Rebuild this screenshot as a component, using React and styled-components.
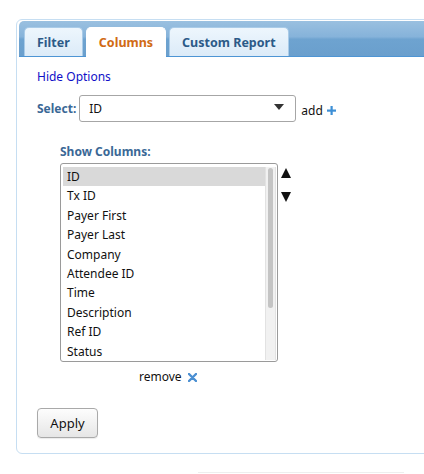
import React from "react";
import styled, { createGlobalStyle } from "styled-components";

const GlobalStyle = createGlobalStyle`
  html, body {
    margin: 0;
    padding: 0;
    background: #fff;
    overflow: hidden;
  }
  body {
    font-family: "Noto Sans", "Open Sans", "DejaVu Sans", sans-serif;
    font-size: 12px;
    color: #111;
  }
`;

const Page = styled.div`
  width: 424px;
  height: 474px;
  padding-top: 19px;
  box-sizing: border-box;
  overflow: hidden;
`;

const Panel = styled.div`
  margin-left: 16px;
  width: 430px;
  height: 435px;
  box-sizing: border-box;
  border: 1px solid #c6def2;
  border-radius: 6px;
  padding: 1px 2px;
`;

const TabBar = styled.div`
  display: flex;
  align-items: flex-end;
  gap: 3px;
  height: 36px;
  box-sizing: border-box;
  padding-left: 5px;
  border-radius: 5px 0 0 0;
  border-bottom: 1px solid #4e95d4;
  background: linear-gradient(
    to bottom,
    #9ac0e0 0%,
    #86b3da 45%,
    #6ea3d0 52%,
    #6a9fcd 100%
  );
`;

const Tab = styled.div`
  height: ${(p) => (p.$active ? "30px" : "29px")};
  margin-bottom: ${(p) => (p.$active ? "-1px" : "0")};
  box-sizing: border-box;
  padding: 0 12px;
  display: flex;
  align-items: center;
  font-weight: bold;
  font-size: 12.5px;
  color: ${(p) => (p.$active ? "#d16a14" : "#2c5a88")};
  background: ${(p) =>
    p.$active ? "#fff" : "linear-gradient(to bottom, #edf6fd, #dcebf8)"};
  border: 1px solid ${(p) => (p.$active ? "#fff" : "#a9cbe8")};
  border-bottom: none;
  border-radius: 5px 5px 0 0;
`;

const Content = styled.div`
  padding: 12px 0 0 18px;
`;

const HideLink = styled.a`
  color: #1010c8;
  text-decoration: none;
  font-size: 12px;
  display: block;
  line-height: 16px;
`;

const SelectRow = styled.div`
  display: flex;
  align-items: center;
  margin-top: 10px;
`;

const Label = styled.span`
  font-weight: bold;
  color: #3a6896;
  font-size: 12px;
`;

const SelectBox = styled.div`
  margin-left: 3px;
  width: 217px;
  height: 27px;
  box-sizing: border-box;
  border: 1px solid #a6a6a6;
  border-radius: 3px;
  display: flex;
  align-items: center;
  justify-content: space-between;
  padding: 0 11px 0 9px;
  background: #fff;
`;

const Caret = styled.span`
  width: 0;
  height: 0;
  border-left: 5px solid transparent;
  border-right: 5px solid transparent;
  border-top: 6px solid #333;
  margin-top: -4px;
`;

const AddLink = styled.span`
  margin-left: 5px;
  display: flex;
  align-items: center;
  gap: 4px;
  margin-top: 3px;
`;

const Columns = styled.div`
  margin-left: 23px;
  margin-top: 21px;
`;

const ListRow = styled.div`
  display: flex;
  margin-top: 3px;
`;

const ListBox = styled.div`
  width: 218px;
  height: 199px;
  box-sizing: border-box;
  border: 1px solid #9a9a9a;
  border-radius: 3px;
  padding: 3px 1px 1px 2px;
  display: flex;
`;

const Items = styled.div`
  flex: 1;
  overflow: hidden;
`;

const Item = styled.div`
  height: 19.4px;
  line-height: 19.4px;
  padding-left: 4px;
  font-size: 12px;
  color: #111;
  background: ${(p) => (p.$selected ? "#d9d9d9" : "transparent")};
`;

const Track = styled.div`
  width: 11px;
  background: #f1f1f1;
  border-left: 1px solid #e2e2e2;
  border-right: 1px solid #e2e2e2;
  padding: 1px 2px;
  box-sizing: border-box;
`;

const Thumb = styled.div`
  height: 140px;
  border-radius: 4px;
  background: #c4c4c4;
`;

const Arrows = styled.div`
  display: flex;
  flex-direction: column;
  margin-left: 3px;
  gap: 14px;
  padding-top: 5px;
`;

const Arrow = styled.span`
  width: 0;
  height: 0;
  border-left: 5px solid transparent;
  border-right: 5px solid transparent;
  ${(p) =>
    p.$up ? "border-bottom: 10px solid #111;" : "border-top: 10px solid #111;"}
`;

const RemoveRow = styled.div`
  display: flex;
  align-items: center;
  gap: 6px;
  margin-left: 79px;
  margin-top: 8px;
  line-height: 14px;
`;

const ApplyButton = styled.button`
  margin-top: 24px;
  width: 61px;
  height: 30px;
  font-family: inherit;
  font-size: 13px;
  color: #111;
  border: 1px solid #a9a9a9;
  border-radius: 4px;
  background: linear-gradient(to bottom, #fdfdfd, #e6e6e6);
  box-shadow: 0 1px 1px rgba(0, 0, 0, 0.08);
`;

const FooterLine = styled.div`
  margin: 18px 0 0 198px;
  width: 206px;
  border-top: 1px solid #eeeeee;
`;

const PlusIcon = () => (
  <svg width="9" height="9" viewBox="0 0 9 9">
    <rect x="3.5" y="0" width="2.2" height="9" fill="#3d8fd6" />
    <rect x="0" y="3.5" width="9" height="2.2" fill="#3d8fd6" />
  </svg>
);

const CrossIcon = () => (
  <svg width="9" height="9" viewBox="0 0 9 9">
    <path d="M1 1 L8 8 M8 1 L1 8" stroke="#4a8fd2" strokeWidth="2.4" strokeLinecap="round" />
  </svg>
);

const columns = [
  "ID",
  "Tx ID",
  "Payer First",
  "Payer Last",
  "Company",
  "Attendee ID",
  "Time",
  "Description",
  "Ref ID",
  "Status",
];

export default function App() {
  return (
    <Page>
      <GlobalStyle />
      <Panel>
        <TabBar>
          <Tab>Filter</Tab>
          <Tab $active>Columns</Tab>
          <Tab>Custom Report</Tab>
        </TabBar>
        <Content>
          <HideLink href="#">Hide Options</HideLink>
          <SelectRow>
            <Label>Select:</Label>
            <SelectBox>
              <span>ID</span>
              <Caret />
            </SelectBox>
            <AddLink>
              add <PlusIcon />
            </AddLink>
          </SelectRow>
          <Columns>
            <Label>Show Columns:</Label>
            <ListRow>
              <ListBox>
                <Items>
                  {columns.map((c, i) => (
                    <Item key={c} $selected={i === 0}>
                      {c}
                    </Item>
                  ))}
                </Items>
                <Track>
                  <Thumb />
                </Track>
              </ListBox>
              <Arrows>
                <Arrow $up />
                <Arrow />
              </Arrows>
            </ListRow>
            <RemoveRow>
              remove <CrossIcon />
            </RemoveRow>
          </Columns>
          <ApplyButton>Apply</ApplyButton>
        </Content>
      </Panel>
      <FooterLine />
    </Page>
  );
}
